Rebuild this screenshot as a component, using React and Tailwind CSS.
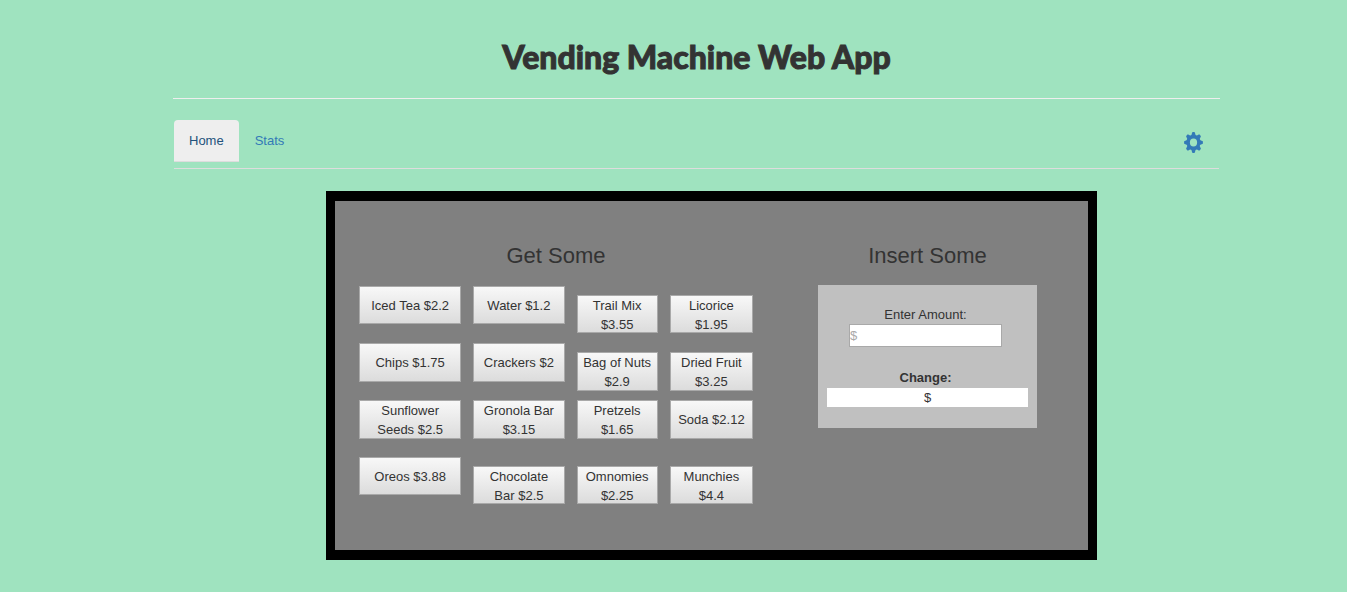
const rows = [
  { align: '[align-items:baseline]', height: 'h-[38px]', items: ['Iced Tea $2.2', 'Water $1.2', 'Trail Mix $3.55', 'Licorice $1.95'] },
  { align: '[align-items:baseline]', height: 'h-[39px]', items: ['Chips $1.75', 'Crackers $2', 'Bag of Nuts $2.9', 'Dried Fruit $3.25'] },
  { align: '[align-items:start]', height: 'h-[39px]', items: ['Sunflower Seeds $2.5', 'Gronola Bar $3.15', 'Pretzels $1.65', 'Soda $2.12'] },
  { align: '[align-items:baseline]', height: 'h-[38px]', items: ['Oreos $3.88', 'Chocolate Bar $2.5', 'Omnomies $2.25', 'Munchies $4.4'] },
];

const teeth = [0, 45, 90, 135, 180, 225, 270, 315];

function CogIcon() {
  return (
    <svg width="19" height="21" viewBox="0 0 20 20" preserveAspectRatio="none" fill="currentColor" aria-hidden="true">
      <path
        fillRule="evenodd"
        d="M10 2.6a7.4 7.4 0 1 0 0 14.8a7.4 7.4 0 1 0 0-14.8ZM10 6.2a3.8 3.8 0 1 1 0 7.6a3.8 3.8 0 1 1 0-7.6Z"
      />
      {teeth.map((angle) => (
        <path key={angle} d="M7.4 4.2L8.5 0.7Q8.7 0.1 9.3 0.1H10.7Q11.3 0.1 11.5 0.7L12.6 4.2Z" transform={`rotate(${angle} 10 10)`} />
      ))}
    </svg>
  );
}

function ProductRow({ row }) {
  return (
    <div className={`grid h-[57px] grid-cols-[102fr_91fr_81fr_83fr] gap-3 ${row.align}`}>
      {row.items.map((item) => (
        <button
          key={item}
          type="button"
          className={`flex [align-items:safe_center] justify-center border border-[#a9a9a9] bg-linear-to-b from-[#f8f8f8] to-[#dcdcdc] px-1 text-center ${row.height}`}
        >
          {item}
        </button>
      ))}
    </div>
  );
}

export default function App() {
  return (
    <div className="min-h-screen bg-[#9fe3bf] pr-[127px] pb-8 pl-[173px] font-['Liberation_Sans',Arial,sans-serif] text-[13px] leading-[19px] text-[#333]">
      <header className="border-b border-[#eee] pt-8 pb-4">
        <h1 className="text-center font-['Lato',sans-serif] text-[32px] leading-[50px] font-black [-webkit-text-stroke:1px_#333]">
          Vending Machine Web App
        </h1>
      </header>

      <nav className="mx-px mt-[21px] flex items-start justify-between border-b border-[#ddd] pb-[6px]">
        <div className="flex">
          <a href="#home" className="rounded-t border-b border-[#ddd] bg-[#eee] px-[15px] py-[11px] text-[#23527c]">
            Home
          </a>
          <a href="#stats" className="px-4 py-[11px] text-[#337ab7]">
            Stats
          </a>
        </div>
        <a href="#settings" aria-label="Settings" className="px-4 pt-3 text-[#337ab7]">
          <CogIcon />
        </a>
      </nav>

      <main className="mt-[22px] mr-[123px] ml-[153px] flex items-start border-x-[9px] border-y-[10px] border-black bg-[#808080] px-6 pt-10 pb-9">
        <section className="w-[394px]">
          <h2 className="mb-4 text-center text-[22px] leading-[29px]">Get Some</h2>
          {rows.map((row) => (
            <ProductRow key={row.items[0]} row={row} />
          ))}
        </section>

        <section className="ml-[65px] w-[219px]">
          <h2 className="mb-[15px] text-center text-[22px] leading-[29px]">Insert Some</h2>
          <div className="bg-[#c0c0c0] px-[9px] pt-5 pb-[21px] text-center">
            <div className="pr-1">
              <label htmlFor="amount" className="block">
                Enter Amount:
              </label>
              <input
                id="amount"
                type="text"
                placeholder="$"
                className="mx-auto block h-[23px] w-[153px] border border-[#a9a9a9] bg-white placeholder:text-[#a9a9a9]"
              />
              <div className="mt-[21px] font-bold">Change:</div>
            </div>
            <output className="mt-px block bg-white">$</output>
          </div>
        </section>
      </main>
    </div>
  );
}
